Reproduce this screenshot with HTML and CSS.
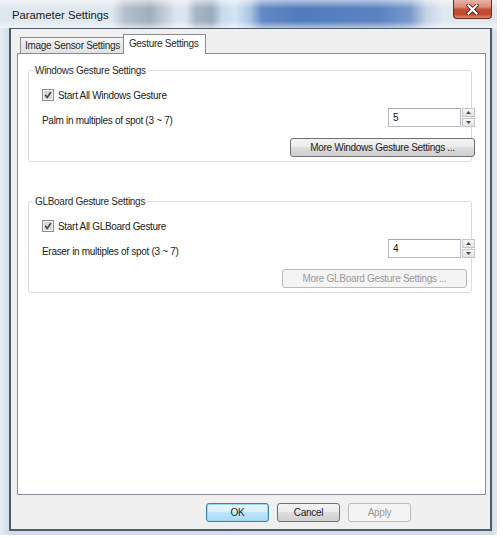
FILE: index.html
```html
<!DOCTYPE html>
<html>
<head>
<meta charset="utf-8">
<title>Parameter Settings</title>
<link rel="stylesheet" href="styles.css">
</head>
<body>
<div class="window">
  <div class="titlebar">
    <span class="title">Parameter Settings</span>
    <div class="close">
      <svg width="13" height="11" viewBox="0 0 13 11"><path d="M2.5 1.5 L10.5 9.5 M10.5 1.5 L2.5 9.5" stroke="#5b1d12" stroke-width="4" stroke-linecap="square" fill="none"/><path d="M2.5 1.5 L10.5 9.5 M10.5 1.5 L2.5 9.5" stroke="#ffffff" stroke-width="2.2" stroke-linecap="square" fill="none"/></svg>
    </div>
  </div>
  <div class="frame-body">
    <div class="client">
      <div class="tabs">
        <div class="tab">Image Sensor Settings</div>
        <div class="tab active">Gesture Settings</div>
      </div>
      <div class="panel">
        <fieldset class="group">
          <legend>Windows Gesture Settings</legend>
          <div class="check-row">
            <span class="checkbox"><svg width="12" height="12" viewBox="0 0 12 12"><rect x="0.5" y="0.5" width="11" height="11" fill="#f4f4f4" stroke="#8b8c8d"/><rect x="2" y="2" width="8" height="8" fill="#d8d8d8"/><path d="M3.2 5.8 L5.2 8.4 L8.9 3" fill="none" stroke="#3b4350" stroke-width="1.5"/></svg></span>
            <span>Start All Windows Gesture</span>
          </div>
          <div class="spin-row">
            <span class="label">Palm in multiples of spot (3 ~ 7)</span>
            <div class="spin">
              <div class="spin-field">5</div>
              <div class="spin-btns">
                <div class="spin-btn"><svg width="5" height="3" viewBox="0 0 5 3"><path d="M0 3 L2.5 0 L5 3 Z" fill="#4a4a4a"/></svg></div>
                <div class="spin-btn"><svg width="5" height="3" viewBox="0 0 5 3"><path d="M0 0 L2.5 3 L5 0 Z" fill="#4a4a4a"/></svg></div>
              </div>
            </div>
          </div>
          <div class="btn-row">
            <button class="btn wide">More Windows Gesture Settings ...</button>
          </div>
        </fieldset>

        <fieldset class="group second">
          <legend>GLBoard Gesture Settings</legend>
          <div class="check-row">
            <span class="checkbox"><svg width="12" height="12" viewBox="0 0 12 12"><rect x="0.5" y="0.5" width="11" height="11" fill="#f4f4f4" stroke="#8b8c8d"/><rect x="2" y="2" width="8" height="8" fill="#d8d8d8"/><path d="M3.2 5.8 L5.2 8.4 L8.9 3" fill="none" stroke="#3b4350" stroke-width="1.5"/></svg></span>
            <span>Start All GLBoard Gesture</span>
          </div>
          <div class="spin-row">
            <span class="label">Eraser in multiples of spot (3 ~ 7)</span>
            <div class="spin">
              <div class="spin-field">4</div>
              <div class="spin-btns">
                <div class="spin-btn"><svg width="5" height="3" viewBox="0 0 5 3"><path d="M0 3 L2.5 0 L5 3 Z" fill="#4a4a4a"/></svg></div>
                <div class="spin-btn"><svg width="5" height="3" viewBox="0 0 5 3"><path d="M0 0 L2.5 3 L5 0 Z" fill="#4a4a4a"/></svg></div>
              </div>
            </div>
          </div>
          <div class="btn-row">
            <button class="btn wide" disabled>More GLBoard Gesture Settings ...</button>
          </div>
        </fieldset>
      </div>
      <div class="footer">
        <button class="btn default">OK</button>
        <button class="btn">Cancel</button>
        <button class="btn" disabled>Apply</button>
      </div>
    </div>
  </div>
</div>
</body>
</html>
```
FILE: styles.css
```css
html, body {
  margin: 0;
  padding: 0;
  background: #ffffff;
}

body {
  font-family: "Liberation Sans", Arial, sans-serif;
  font-size: 10px;
  letter-spacing: -0.3px;
  color: #222222;
}

.window {
  width: 497px;
  height: 535px;
  display: flex;
  flex-direction: column;
  background: #d8e1ea;
}

.titlebar {
  height: 28px;
  flex: none;
  display: flex;
  align-items: flex-start;
  padding: 0 5px 0 12px;
  box-sizing: border-box;
  background:
    linear-gradient(to bottom, rgba(255,255,255,0.55) 0, rgba(255,255,255,0) 30%, rgba(255,255,255,0) 75%, rgba(255,255,255,0.55) 100%),
    linear-gradient(to right, #dfe7ef 0, #dfe7ef 112px, #b4c0cd 125px, #a0aebd 150px, #c2cdd9 165px, #dce5ee 176px, #dce5ee 186px, #a6b5c5 196px, #9aabbd 212px, #c7d9ea 222px, #d4e6f5 235px, #abc5e2 250px, #6189c3 262px, #527bbc 300px, #5b83c2 380px, #7898ca 410px, #c4d3e3 426px, #dfe7ef 442px, #dfe7ef 100%);
}

.title {
  font-size: 11.3px;
  letter-spacing: 0;
  line-height: 14px;
  margin-top: 8px;
  color: #1b1b1b;
}

.close {
  margin-left: auto;
  width: 39px;
  height: 19px;
  box-sizing: border-box;
  border: 1px solid #6a2a1f;
  border-top: none;
  border-radius: 0 0 4px 4px;
  background: linear-gradient(to bottom, #e9b3a6 0%, #dd8e7a 38%, #c64d33 52%, #c4472e 78%, #dc8a72 100%);
  display: flex;
  align-items: center;
  justify-content: center;
}

.frame-body {
  flex: 1;
  display: flex;
  padding: 0 5px 4px 9px;
  background: linear-gradient(to right, #e6ecf2 0, #d3dde7 9px, #d3dde7 calc(100% - 5px), #e3e9ef 100%);
}

.client {
  flex: 1;
  display: flex;
  flex-direction: column;
  border: 2px solid #4e5b69;
  border-top-width: 1px;
  background: #f0f0f0;
  padding: 5px 4px 0 6px;
}

.tabs {
  display: flex;
  align-items: flex-end;
  padding-left: 3px;
  height: 19px;
}

.tab {
  height: 16px;
  box-sizing: border-box;
  border: 1px solid #898c95;
  border-bottom: none;
  padding: 0 3px 0 4px;
  line-height: 15px;
  background: linear-gradient(to bottom, #f4f4f4, #e1e1e1);
  color: #2a2a2a;
}

.tab.active {
  position: relative;
  height: 20px;
  margin-bottom: -1px;
  margin-left: -1px;
  background: #ffffff;
  padding: 0 6px 0 5px;
  line-height: 17px;
}

.panel {
  flex: 1;
  border: 1px solid #898c95;
  background: #ffffff;
  padding: 10px 13px 0 10px;
}

.group {
  margin: 0;
  padding: 0 0 4px 4px;
  min-width: 0;
  border: 1px solid #d5dde3;
  border-radius: 3px;
}

.group.second {
  margin-top: 33px;
}

.group legend {
  padding: 0 2px;
  line-height: 13px;
  color: #2a2a2a;
}

.check-row {
  display: flex;
  align-items: center;
  gap: 4px;
  height: 14px;
  margin-top: 11px;
  padding-left: 9px;
}

.checkbox {
  display: flex;
}

.spin-row {
  display: flex;
  align-items: flex-end;
  margin-top: 6px;
  padding-left: 9px;
}

.label {
  line-height: 13px;
}

.spin {
  margin-left: auto;
  margin-right: -4px;
  display: flex;
  height: 19px;
}

.spin-field {
  width: 73px;
  box-sizing: border-box;
  border: 1px solid #b6b9bf;
  border-top-color: #a5a8ae;
  background: #ffffff;
  padding-left: 4px;
  line-height: 17px;
  color: #111111;
}

.spin-btns {
  width: 14px;
  display: flex;
  flex-direction: column;
  gap: 1px;
  padding-left: 1px;
  box-sizing: border-box;
}

.spin-btn {
  flex: 1;
  border: 1px solid #c3c5c9;
  background: linear-gradient(to bottom, #f7f7f7, #e3e3e3);
  display: flex;
  align-items: center;
  justify-content: center;
}

.btn-row {
  display: flex;
  justify-content: flex-end;
  margin-top: 11px;
  margin-right: -4px;
}

.second .btn-row {
  margin-right: 4px;
}

.btn {
  font: inherit;
  letter-spacing: inherit;
  height: 19px;
  box-sizing: border-box;
  border: 1px solid #707070;
  border-radius: 3px;
  background: linear-gradient(to bottom, #f3f3f3 0, #ebebeb 45%, #dddddd 50%, #cfcfcf 100%);
  color: #1e1e1e;
  padding: 0;
  margin: 0;
}

.btn.wide {
  width: 185px;
}

.btn:disabled {
  border-color: #b9bcbf;
  background: #f4f4f4;
  color: #9a9a9a;
}

.btn.default {
  border-color: #3c7fb1;
  box-shadow: inset 0 0 0 1px #9fd8f5;
  background: linear-gradient(to bottom, #eaf6fd 0, #d9f0fc 45%, #bee6fd 50%, #a7d9f5 100%);
}

.footer {
  height: 34px;
  flex: none;
  display: flex;
  justify-content: flex-end;
  align-items: flex-start;
  gap: 8px;
  padding: 8px 75px 0 0;
  box-sizing: border-box;
}

.footer .btn {
  width: 63px;
}
```
